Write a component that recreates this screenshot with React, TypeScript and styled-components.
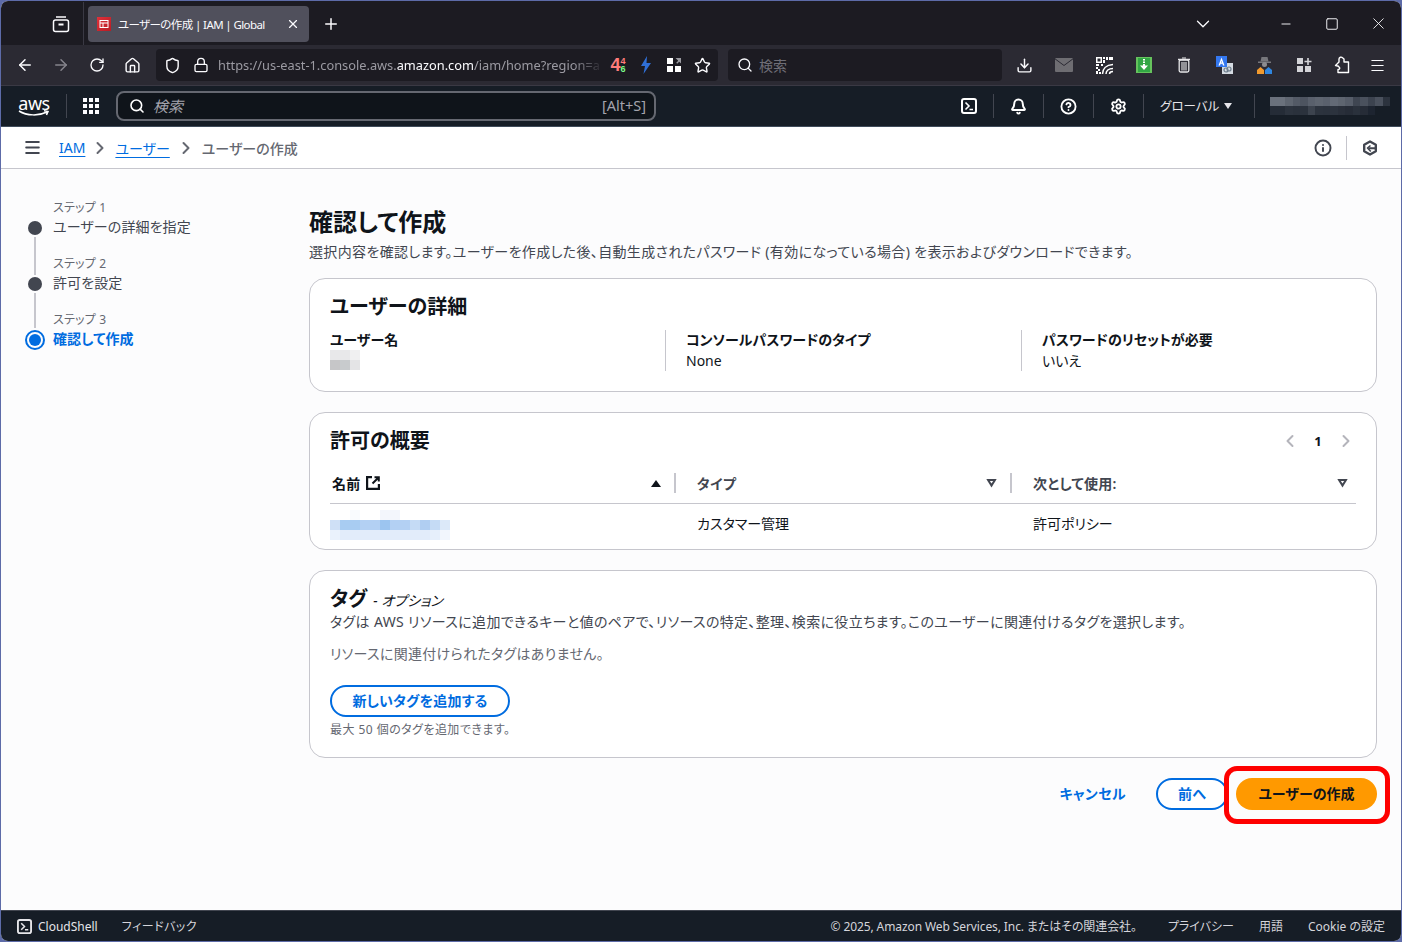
import React from 'react';
import styled, {createGlobalStyle} from 'styled-components';
import {
  ArrowLeft, ArrowRight, RotateCw, House, Shield, Lock, Star, Search, Download, X, Plus,
  ChevronDown, ChevronRight, ChevronLeft, Minus, Square, Menu, Bell, CircleHelp, Settings, Info,
} from 'lucide-react';

const UI_FONT = `"Noto Sans", "Noto Sans CJK JP", sans-serif`;

const GlobalStyle = createGlobalStyle`
  html, body {
    margin: 0;
    padding: 0;
    background: #5d6ba8;
  }
  * {
    box-sizing: border-box;
  }
`;

const Window = styled.div`
  width: 1402px;
  height: 942px;
  border: 1px solid #5d6ba8;
  border-radius: 8px;
  overflow: hidden;
  display: flex;
  flex-direction: column;
  background: #fcfcfd;
  font-family: ${UI_FONT};
  font-size: 14px;
  font-feature-settings: "palt";
  color: #0f141a;
`;

/* browser chrome */
const TabBar = styled.div`
  height: 44px;
  flex: none;
  background: #1c1b22;
  display: flex;
  align-items: center;
  color: #fbfbfe;
  padding-top: 1px;
`;

const TabBarButton = styled.div<{$width: number}>`
  width: ${p => p.$width}px;
  height: 36px;
  flex: none;
  display: flex;
  align-items: center;
  justify-content: center;
`;

const TabDivider = styled.div`
  width: 1px;
  height: 44px;
  background: #3a3944;
  margin: 0 4px 0 2px;
  flex: none;
`;

const Tab = styled.div`
  width: 221px;
  height: 36px;
  flex: none;
  border-radius: 4px;
  background: #50505c;
  display: flex;
  align-items: center;
  padding: 0 9px;
  font-size: 11.5px;
  letter-spacing: -0.6px;
  gap: 7px;
  svg {
    flex: none;
  }
`;

const Favicon = styled.div`
  width: 14px;
  height: 14px;
  flex: none;
  background: linear-gradient(135deg, #e0313a, #b81c24);
  display: flex;
  align-items: center;
  justify-content: center;
`;

const TabTitle = styled.span`
  flex: 1;
  white-space: nowrap;
`;

const Spacer = styled.div`
  flex: 1;
`;

const Toolbar = styled.div`
  height: 41px;
  flex: none;
  background: #2b2a33;
  border-bottom: 1px solid #3a3944;
  display: flex;
  align-items: center;
  padding-left: 6px;
  color: #fbfbfe;
`;

const ToolButton = styled.div<{$width?: number; $dim?: boolean}>`
  width: ${p => p.$width ?? 36}px;
  height: 32px;
  flex: none;
  display: flex;
  align-items: center;
  justify-content: center;
  color: ${p => (p.$dim ? '#85848c' : '#fbfbfe')};
`;

const UrlBar = styled.div`
  width: 562px;
  height: 32px;
  margin-left: 7px;
  flex: none;
  border-radius: 4px;
  background: #1c1b22;
  display: flex;
  align-items: center;
  padding-left: 4px;
`;

const UrlText = styled.div`
  width: 386px;
  height: 20px;
  line-height: 20px;
  overflow: hidden;
  white-space: nowrap;
  font-size: 12.8px;
  color: #9b9aa2;
  mask-image: linear-gradient(to right, #000 92%, transparent);
`;

const UrlHost = styled.span`
  color: #fbfbfe;
`;

const Counter = styled.div`
  display: flex;
  align-items: center;
  font-family: "Liberation Sans", sans-serif;
  font-weight: 700;
  color: #ff7b7b;
`;

const CounterMain = styled.span`
  font-size: 18px;
  line-height: 18px;
`;

const CounterSide = styled.div`
  display: flex;
  flex-direction: column;
  font-size: 9px;
  line-height: 8px;
`;

const CounterLow = styled.span`
  color: #7dff8a;
`;

const SearchBar = styled.div`
  width: 274px;
  height: 32px;
  margin-left: 10px;
  margin-right: 2px;
  flex: none;
  border-radius: 4px;
  background: #1c1b22;
  display: flex;
  align-items: center;
  padding-left: 9px;
  gap: 6px;
  color: #6f6e77;
  font-size: 14px;
`;

/* aws top nav */
const TopNav = styled.div`
  height: 41px;
  flex: none;
  background: #161d26;
  border-bottom: 1px solid #3f4b5a;
  display: flex;
  align-items: center;
  padding-right: 11px;
  color: #fff;
`;

const AwsLogo = styled.div`
  width: 32px;
  margin-left: 17px;
  flex: none;
  display: flex;
  flex-direction: column;
  align-items: center;
  font-family: "Noto Sans", sans-serif;
  font-size: 18px;
  line-height: 14px;
  font-weight: 400;
  letter-spacing: -0.5px;
`;

const NavDivider = styled.div<{$ml?: number; $mr?: number}>`
  width: 1px;
  height: 24px;
  flex: none;
  background: #424650;
  margin: 0 ${p => p.$mr ?? 0}px 0 ${p => p.$ml ?? 0}px;
`;

const NavSearch = styled.div`
  width: 540px;
  height: 30px;
  flex: none;
  margin-left: 16px;
  border: 2px solid #656871;
  border-radius: 8px;
  background: #0f141a;
  display: flex;
  align-items: center;
  padding: 0 8px 0 11px;
  gap: 8px;
  color: #a4a4ad;
`;

const NavSearchText = styled.span`
  flex: 1;
  font-style: italic;
  font-size: 15px;
  margin-top: -2px;
`;

const NavShortcut = styled.span`
  font-size: 14.5px;
  margin-top: -2px;
`;

const NavIcon = styled.div`
  width: 49px;
  flex: none;
  display: flex;
  justify-content: center;
`;

const RegionText = styled.div`
  width: 110px;
  flex: none;
  display: flex;
  align-items: center;
  gap: 5px;
  padding: 0 0 2px 16px;
  font-size: 12.5px;
  color: #e6e6ea;
`;

const Caret = styled.span<{$color: string; $size?: number}>`
  width: 0;
  height: 0;
  flex: none;
  margin-top: 2px;
  border-left: ${p => p.$size ?? 4.5}px solid transparent;
  border-right: ${p => p.$size ?? 4.5}px solid transparent;
  border-top: ${p => (p.$size ?? 4.5) + 2}px solid ${p => p.$color};
`;

const PixelGrid = styled.div<{$cols: number; $cell: number; $rowHeight?: number}>`
  display: grid;
  grid-template-columns: repeat(${p => p.$cols}, ${p => p.$cell}px);
  grid-auto-rows: ${p => p.$rowHeight ?? p.$cell}px;
  flex: none;
`;

const Pixel = styled.div<{$color: string}>`
  background: ${p => p.$color};
`;

const Pixels: React.FC<{cols: number; cell: number; rowHeight?: number; colors: string[]}> = ({cols, cell, rowHeight, colors}) => (
  <PixelGrid $cols={cols} $cell={cell} $rowHeight={rowHeight}>
    {colors.map((c, i) => (
      <Pixel key={i} $color={c}/>
    ))}
  </PixelGrid>
);

/* breadcrumb */
const BreadcrumbBar = styled.div`
  height: 42px;
  flex: none;
  background: #fff;
  border-bottom: 1px solid #c6c6cd;
  display: flex;
  align-items: center;
  padding: 0 0 0 21px;
  color: #424650;
`;

const CrumbLink = styled.a`
  color: #006ce0;
  text-decoration: underline;
  text-underline-offset: 3px;
`;

const CrumbSep = styled.div<{$width: number}>`
  width: ${p => p.$width}px;
  flex: none;
  display: flex;
  justify-content: center;
  color: #656871;
`;

const CrumbCurrent = styled.span`
  color: #656871;
  font-weight: 500;
`;

const BarIcon = styled.div`
  width: 24px;
  flex: none;
  display: flex;
  justify-content: center;
`;

const BarDivider = styled.div`
  width: 1px;
  height: 24px;
  background: #c6c6cd;
  margin: 0 11px;
`;

/* main area */
const Main = styled.div`
  flex: 1;
  display: flex;
  min-height: 0;
`;

const Sidebar = styled.nav`
  width: 308px;
  flex: none;
  padding: 30px 0 0 22px;
`;

const Step = styled.div`
  height: 56px;
  display: flex;
  gap: 6px;
`;

const Rail = styled.div`
  width: 24px;
  flex: none;
  display: flex;
  flex-direction: column;
  align-items: center;
`;

const RailLine = styled.div<{$height?: number; $hidden?: boolean}>`
  width: 2px;
  flex: ${p => (p.$height ? 'none' : '1')};
  height: ${p => (p.$height ? `${p.$height}px` : 'auto')};
  background: ${p => (p.$hidden ? 'transparent' : '#c6c6cd')};
`;

const StepDot = styled.div`
  width: 14px;
  height: 14px;
  margin: 2px 0;
  flex: none;
  border-radius: 50%;
  background: #424650;
`;

const StepRing = styled.div`
  width: 20px;
  height: 20px;
  margin: 2px 0;
  flex: none;
  border-radius: 50%;
  border: 2px solid #006ce0;
  display: flex;
  align-items: center;
  justify-content: center;
  &::after {
    content: '';
    width: 12px;
    height: 12px;
    border-radius: 50%;
    background: #006ce0;
  }
`;

const StepText = styled.div`
  display: flex;
  flex-direction: column;
  padding-top: 1px;
`;

const StepLabel = styled.span`
  font-size: 12px;
  line-height: 16px;
  color: #656871;
  letter-spacing: 0.2px;
`;

const StepTitle = styled.span<{$active?: boolean}>`
  margin-top: 1px;
  line-height: 20px;
  letter-spacing: 0.1px;
  color: ${p => (p.$active ? '#006ce0' : '#424650')};
  font-weight: ${p => (p.$active ? 700 : 400)};
`;

const Content = styled.main`
  flex: 1;
  min-width: 0;
  padding: 38px 24px 0 0;
  display: flex;
  flex-direction: column;
`;

const PageTitle = styled.h1`
  margin: 0;
  font-size: 24px;
  line-height: 30px;
  font-weight: 700;
`;

const PageDesc = styled.p`
  margin: 5px 0 16px;
  line-height: 20px;
  letter-spacing: 0.35px;
  color: #424650;
`;

const Card = styled.section<{$height: number}>`
  height: ${p => p.$height}px;
  flex: none;
  background: #fff;
  border: 1px solid #c6c6cd;
  border-radius: 16px;
  padding: 14px 20px 0;
  & + & {
    margin-top: 20px;
  }
`;

const CardTitle = styled.h2`
  margin: 0;
  font-size: 20px;
  line-height: 28px;
  font-weight: 700;
  display: flex;
  align-items: baseline;
`;

const CardOption = styled.span`
  margin-left: 6px;
  font-size: 14px;
  font-weight: 400;
  font-style: italic;
`;

const DetailGrid = styled.div`
  margin-top: 9px;
  display: grid;
  grid-template-columns: 336px 356px 1fr;
`;

const DetailCol = styled.div<{$divided?: boolean}>`
  height: 41px;
  padding-left: ${p => (p.$divided ? '20px' : '0')};
  border-left: ${p => (p.$divided ? '1px solid #c6c6cd' : 'none')};
  margin-left: ${p => (p.$divided ? '-1px' : '0')};
`;

const DetailLabel = styled.div`
  line-height: 20px;
  font-weight: 600;
`;

const DetailValue = styled.div`
  line-height: 20px;
  margin-top: 1px;
  color: #0f141a;
`;

const CardHeader = styled.div`
  display: flex;
  align-items: center;
  justify-content: space-between;
`;

const Pager = styled.div`
  display: flex;
  align-items: center;
  gap: 6px;
  color: #b4b4bb;
  font-weight: 700;
`;

const PageNumber = styled.span`
  width: 24px;
  text-align: center;
  color: #0f141a;
  font-size: 13px;
`;

const TableGrid = styled.div`
  display: grid;
  grid-template-columns: 346px 336px 1fr;
`;

const HeadCell = styled.div<{$first?: boolean}>`
  height: 40px;
  margin-top: 9px;
  border-bottom: 1px solid #c6c6cd;
  display: flex;
  align-items: center;
  padding: 0 8px 1px ${p => (p.$first ? '2px' : '21px')};
  font-weight: 600;
  letter-spacing: 0.3px;
  color: ${p => (p.$first ? '#0f141a' : '#424650')};
`;

const HeadLabel = styled.span`
  flex: 1;
  display: flex;
  align-items: center;
  gap: 5px;
`;

const HeadSep = styled.div`
  width: 2px;
  height: 20px;
  background: #c6c6cd;
  margin-left: 13px;
  margin-right: -8px;
`;

const SortUp = styled.span`
  width: 0;
  height: 0;
  border-left: 5.5px solid transparent;
  border-right: 5.5px solid transparent;
  border-bottom: 7px solid #0f141a;
`;

const SortDown = styled.span`
  width: 11px;
  height: 9px;
  flex: none;
  background: #424650;
  clip-path: polygon(0 0, 100% 0, 50% 100%);
  display: flex;
  justify-content: center;
  padding-top: 2px;
  &::after {
    content: '';
    width: 4px;
    height: 3px;
    background: #fff;
    clip-path: polygon(0 0, 100% 0, 50% 100%);
  }
`;

const BodyCell = styled.div<{$first?: boolean}>`
  height: 37px;
  padding: 0 0 ${p => (p.$first ? '1px' : '0')} ${p => (p.$first ? '0' : '21px')};
  display: flex;
  align-items: ${p => (p.$first ? 'flex-end' : 'center')};
  color: #0f141a;
`;

const TagDesc = styled.p`
  margin: -3px 0 0;
  line-height: 20px;
  letter-spacing: 0.35px;
  color: #424650;
`;

const TagEmpty = styled.p`
  margin: 12px 0 0;
  line-height: 20px;
  letter-spacing: 0.3px;
  color: #656871;
`;

const OutlineButton = styled.button<{$width: number}>`
  width: ${p => p.$width}px;
  height: 32px;
  flex: none;
  padding: 0 0 3px;
  border: 2px solid #006ce0;
  border-radius: 20px;
  background: #fff;
  color: #006ce0;
  font: 700 14px ${UI_FONT};
  font-feature-settings: "palt";
  letter-spacing: 0.2px;
`;

const AddTagButton = styled(OutlineButton)`
  display: block;
  margin-top: 21px;
`;

const Hint = styled.div`
  margin-top: 5px;
  font-size: 12px;
  line-height: 16px;
  letter-spacing: 0.45px;
  color: #656871;
`;

const Actions = styled.div`
  margin-top: 20px;
  display: flex;
  align-items: center;
  justify-content: flex-end;
`;

const CancelLink = styled.a`
  margin: -3px 30px 0 0;
  color: #006ce0;
  font-weight: 700;
  letter-spacing: 0.4px;
`;

const PrimaryWrap = styled.div`
  position: relative;
  margin-left: 8px;
`;

const PrimaryButton = styled.button`
  display: block;
  width: 141px;
  height: 32px;
  padding: 0 0 2px;
  border: none;
  border-radius: 20px;
  background: #ff9900;
  color: #0f141a;
  font: 700 14px ${UI_FONT};
  font-feature-settings: "palt";
`;

const Highlight = styled.div`
  position: absolute;
  left: -12px;
  right: -13px;
  top: -12px;
  bottom: -14px;
  border: 5px solid #fe0000;
  border-radius: 13px;
  pointer-events: none;
`;

/* footer */
const Footer = styled.footer`
  height: 31px;
  flex: none;
  background: #161d26;
  border-top: 1px solid #424650;
  display: flex;
  align-items: center;
  padding: 0 16px;
  font-size: 12px;
  color: #d5d5db;
`;

const ShellLink = styled.div`
  display: flex;
  align-items: center;
  gap: 6px;
  color: #e6e6ea;
  margin-right: 24px;
`;

const FeedbackLink = styled.span`
  letter-spacing: 0.5px;
`;

const FooterLinks = styled.div`
  display: flex;
  align-items: center;
  gap: 25px;
`;

const Copyright = styled.span`
  margin-right: 6px;
  letter-spacing: -0.1px;
`;

const TerminalIcon: React.FC<{size?: number}> = ({size = 16}) => (
  <svg width={size} height={size} viewBox="0 0 16 16" fill="none" stroke="currentColor" strokeWidth="2">
    <rect x="1" y="1" width="14" height="14" rx="2"/>
    <path d="M4.5 4.5 8 8l-3.500 3.500M8.500 11.500H12" strokeWidth="1.600"/>
  </svg>
);

const FirefoxViewIcon = () => (
  <svg width="18" height="18" viewBox="0 0 18 18" fill="none" stroke="currentColor" strokeWidth="1.500">
    <path d="M4 2h10"/>
    <rect x="1.500" y="5" width="15" height="11.500" rx="2"/>
    <path d="M6.500 9.500h5" strokeWidth="2"/>
  </svg>
);

const AppsIcon = () => (
  <svg width="18" height="18" viewBox="0 0 18 18" fill="currentColor">
    {[1, 7, 13].flatMap(y =>
      [1, 7, 13].map(x => <rect key={`${x}-${y}`} x={x} y={y} width="4" height="4"/>),
    )}
  </svg>
);

const ExtGridIcon: React.FC<{plus?: boolean}> = ({plus}) => (
  <svg width="16" height="16" viewBox="0 0 16 16" fill={plus ? '#d4d4d8' : '#fff'}>
    <rect x="1" y="1" width="6" height="6"/>
    <rect x="1" y="9" width="6" height="6"/>
    <rect x="9" y="9" width="6" height="6"/>
    {plus
      ? <path d="M11.200 1h1.600v2.700h2.700v1.600h-2.700V8h-1.600V5.300H8.500V3.700h2.700z"/>
      : <path d="M9.500 1H15v5.500l-1.800-1.800-2 2-1-1 2-2z" fill="#9a9aa0"/>}
  </svg>
);

const BoltIcon = () => (
  <svg width="10" height="18" viewBox="0 0 10 18" fill="#2f6fd6">
    <path d="M6 0 0 10h4l-1.500 8L10 7H5.500z"/>
  </svg>
);

const MailIcon = () => (
  <svg width="18" height="14" viewBox="0 0 18 14">
    <rect width="18" height="14" rx="1" fill="#6e6d72"/>
    <path d="M0 .8l9 6.700 9-6.700" fill="none" stroke="#2b2a33" strokeWidth="1"/>
  </svg>
);

const QrIcon = () => (
  <svg width="17" height="17" viewBox="0 0 17 17" fill="#fff">
    <path d="M0 0h6v6H0zM1.500 1.500v3h3v-3z" fillRule="evenodd"/>
    <path d="M7 0h2v2H7zM10 0h2v3h-2zM13 0h4v3h-4zM7 3h2v3H7zM0 7h3v2H0zM5 7h2v2H5z"/>
    <path d="M0 10h2v2H0zM2 12h2v2H2zM0 14h2v3H0zM3 15h2v2H3z"/>
    <path d="M6.500 17c0-5 3.500-9 10.500-9.500M10 17c0-3 2.500-5.500 7-5.500M13.500 17c0-1.500 1.500-2.500 3.500-2.500" fill="none" stroke="#fff" strokeWidth="1.500"/>
  </svg>
);

const GreenDownIcon = () => (
  <svg width="16" height="16" viewBox="0 0 16 16">
    <rect width="16" height="16" fill="#66c35d"/>
    <rect x="2" y="1" width="12" height="14" fill="#32a744"/>
    <path d="M7 2h2v1.500H7zM7 4.500h2V6H7zM7 7h2v1.500h3L8 13 4 8.500h3z" fill="#fff"/>
  </svg>
);

const TrashIcon = () => (
  <svg width="14" height="16" viewBox="0 0 14 16" fill="none" stroke="#e8e8ea">
    <path d="M1 2.500h12" strokeWidth="1.500"/>
    <path d="M5 1h4" strokeWidth="1.200"/>
    <rect x="2.200" y="3" width="9.600" height="12" rx="1.500" strokeWidth="1.300"/>
    <path d="M5 5v8.500M7 5v8.500M9 5v8.500" strokeWidth="1.100"/>
  </svg>
);

const TranslateIcon = () => (
  <svg width="17" height="18" viewBox="0 0 17 18">
    <rect x="6" y="7" width="11" height="11" fill="#d5dbe2"/>
    <rect width="11" height="11" fill="#3478f0"/>
    <path d="M5.500 1.500 8.500 9.500H7L6.400 7.800H4.600L4 9.500H2.500zM5 6.500h1L5.500 4.800z" fill="#fff" fillRule="evenodd"/>
    <circle cx="10" cy="14" r="2" fill="none" stroke="#6d7d8c" strokeWidth="1.200"/>
    <circle cx="13" cy="13" r="2" fill="none" stroke="#6d7d8c" strokeWidth="1.200"/>
  </svg>
);

const SpyIcon = () => (
  <svg width="15" height="17" viewBox="0 0 15 17">
    <path d="M4.500 0h6l1 4.500h-8z" fill="#77777c"/>
    <rect x="1" y="4.500" width="13" height="1.500" fill="#77777c"/>
    <circle cx="7.500" cy="7.500" r="2.500" fill="#8c8c90"/>
    <path d="M0 17v-4l3.500-3 3.500 3v4z" fill="#f19a2e"/>
    <path d="M15 17v-4l-3.500-3L8 13v4z" fill="#2f86e0"/>
  </svg>
);

const PuzzleIcon = () => (
  <svg width="17" height="18" viewBox="0 0 17 18" fill="none" stroke="#fff" strokeWidth="1.400" strokeLinejoin="round">
    <path d="M6 6V3a2 2 0 0 1 3.500-1.200L11 3v3h4.500v10.500H5V13.500C6.500 13.500 7 12.500 6.500 11.500S5 9.500 2.500 9.500z"/>
  </svg>
);

const HexIcon = () => (
  <svg width="16" height="16" viewBox="0 0 16 16" fill="none" stroke="#424650" strokeWidth="2.400" strokeLinejoin="round">
    <path d="M8 1.500 13.800 4.700v6.600L8 14.500 2.200 11.300V4.700z"/>
    <path d="M8.500 5.500 5.500 8 8.800 11.500" strokeWidth="1.600"/>
    <path d="M6.500 8.200h7" strokeWidth="2"/>
  </svg>
);

const ExternalIcon = () => (
  <svg width="14" height="14" viewBox="0 0 14 14" fill="none" stroke="#0f141a" strokeWidth="2.200">
    <path d="M6 1.100H1.100v11.800h11.800V8"/>
    <path d="M6.500 7.500 12.800 1.200M8.500 1.200h4.300v4.300" strokeWidth="2"/>
  </svg>
);

const ACCOUNT_PIXELS = [
  '#6a717c', '#6a717c', '#5e6570', '#535a66', '#4d5460', '#59606c', '#5e6570', '#5a616d', '#636a76', '#5e6570', '#565d69', '#3f4652', '#4a515d', '#3c434f', '#4a515d', '#2c333e',
  '#252c37', '#252c37', '#2c333e', '#2a313c', '#2b323d', '#3c434e', '#2c333e', '#2b323d', '#2c333e', '#292f3a', '#262c37', '#2a313c', '#262c37', '#1d2430', '#161d26', '#161d26',
];

const USER_PIXELS = [
  '#e8e8ea', '#e8e8ea', '#f0f0f1',
  '#c6c6c8', '#c8cbcd', '#e4e4e6',
];

const POLICY_PIXELS = [
  '#fff', '#fff', '#f9fbfe', '#fff', '#fff', '#f3f6fc', '#f3f6fc', '#fff', '#fff', '#fff', '#fff', '#fff',
  '#cfe0f6', '#a8ccf2', '#a8ccf2', '#b3d0f3', '#b3d0f3', '#9cc5f0', '#b3d0f3', '#b3d0f3', '#c5dbf5', '#b0cef2', '#c5dbf5', '#dce9f9',
  '#eaf2fc', '#e2ecfa', '#e2ecfa', '#e2ecfa', '#e2ecfa', '#e2ecfa', '#e2ecfa', '#e2ecfa', '#e2ecfa', '#e2ecfa', '#e6effb', '#f2f6fd',
];

const App: React.FC = () => {
  return (
    <>
      <GlobalStyle/>
      <Window>
        <TabBar>
          <TabBarButton $width={40}/>
          <TabBarButton $width={40}>
            <FirefoxViewIcon/>
          </TabBarButton>
          <TabDivider/>
          <Tab>
            <Favicon>
              <svg width="10" height="10" viewBox="0 0 10 10" fill="none" stroke="#fff" strokeWidth="1">
                <rect x="1" y="1.500" width="8" height="7"/>
                <path d="M1 4h8M4 4v4.500"/>
              </svg>
            </Favicon>
            <TabTitle>ユーザーの作成 | IAM | Global</TabTitle>
            <X size={14}/>
          </Tab>
          <TabBarButton $width={44}>
            <Plus size={18}/>
          </TabBarButton>
          <Spacer/>
          <TabBarButton $width={40}>
            <ChevronDown size={22} strokeWidth={1.400}/>
          </TabBarButton>
          <TabBarButton $width={40}/>
          <TabBarButton $width={46}>
            <Minus size={14} strokeWidth={1.600}/>
          </TabBarButton>
          <TabBarButton $width={46}>
            <Square size={14} strokeWidth={1.600}/>
          </TabBarButton>
          <TabBarButton $width={46}>
            <X size={19} strokeWidth={1.100}/>
          </TabBarButton>
        </TabBar>

        <Toolbar>
          <ToolButton><ArrowLeft size={18}/></ToolButton>
          <ToolButton $dim><ArrowRight size={18}/></ToolButton>
          <ToolButton><RotateCw size={16}/></ToolButton>
          <ToolButton $width={34}><House size={17}/></ToolButton>
          <UrlBar>
            <ToolButton $width={24}><Shield size={17}/></ToolButton>
            <ToolButton $width={34}><Lock size={16}/></ToolButton>
            <UrlText>
              https://us-east-1.console.aws.<UrlHost>amazon.com</UrlHost>/iam/home?region=a
            </UrlText>
            <ToolButton $width={28}>
              <Counter>
                <CounterMain>4</CounterMain>
                <CounterSide>
                  <span>4</span>
                  <CounterLow>6</CounterLow>
                </CounterSide>
              </Counter>
            </ToolButton>
            <ToolButton $width={28}><BoltIcon/></ToolButton>
            <ToolButton $width={28}><ExtGridIcon/></ToolButton>
            <ToolButton $width={28}><Star size={17}/></ToolButton>
          </UrlBar>
          <SearchBar>
            <Search size={16} color="#fbfbfe"/>
            検索
          </SearchBar>
          <ToolButton $width={40}><Download size={17}/></ToolButton>
          <ToolButton $width={40}><MailIcon/></ToolButton>
          <ToolButton $width={40}><QrIcon/></ToolButton>
          <ToolButton $width={40}><GreenDownIcon/></ToolButton>
          <ToolButton $width={40}><TrashIcon/></ToolButton>
          <ToolButton $width={40}><TranslateIcon/></ToolButton>
          <ToolButton $width={40}><SpyIcon/></ToolButton>
          <ToolButton $width={40}><ExtGridIcon plus/></ToolButton>
          <ToolButton $width={35}><PuzzleIcon/></ToolButton>
          <ToolButton $width={36}><Menu size={17} strokeWidth={1.500}/></ToolButton>
        </Toolbar>

        <TopNav>
          <AwsLogo>
            aws
            <svg width="32" height="7" viewBox="0 0 32 7" fill="none" stroke="#fff" strokeWidth="1.500">
              <path d="M1 1c8 5 20 5 28 1M26 0.800 30 1.500 28.500 5"/>
            </svg>
          </AwsLogo>
          <NavDivider $ml={16} $mr={15}/>
          <ToolButton $width={18}><AppsIcon/></ToolButton>
          <NavSearch>
            <Search size={16} color="#fff" strokeWidth={2.400}/>
            <NavSearchText>検索</NavSearchText>
            <NavShortcut>[Alt+S]</NavShortcut>
          </NavSearch>
          <Spacer/>
          <NavIcon><TerminalIcon/></NavIcon>
          <NavDivider/>
          <NavIcon><Bell size={17} strokeWidth={2.800}/></NavIcon>
          <NavDivider/>
          <NavIcon><CircleHelp size={17} strokeWidth={2.600}/></NavIcon>
          <NavDivider/>
          <NavIcon><Settings size={17} strokeWidth={2.600}/></NavIcon>
          <NavDivider/>
          <RegionText>
            グローバル
            <Caret $color="#e6e6ea"/>
          </RegionText>
          <NavDivider $mr={15}/>
          <Pixels cols={16} cell={7.500} rowHeight={9} colors={ACCOUNT_PIXELS}/>
        </TopNav>

        <BreadcrumbBar>
          <ToolButton $width={20}><Menu size={19} color="#424650" strokeWidth={2.400}/></ToolButton>
          <ToolButton $width={17}/>
          <CrumbLink>IAM</CrumbLink>
          <CrumbSep $width={30}><ChevronRight size={20} strokeWidth={2.400}/></CrumbSep>
          <CrumbLink>ユーザー</CrumbLink>
          <CrumbSep $width={32}><ChevronRight size={20} strokeWidth={2.400}/></CrumbSep>
          <CrumbCurrent>ユーザーの作成</CrumbCurrent>
          <Spacer/>
          <BarIcon><Info size={18} color="#424650" strokeWidth={2.600}/></BarIcon>
          <BarDivider/>
          <BarIcon><HexIcon/></BarIcon>
          <ToolButton $width={19}/>
        </BreadcrumbBar>

        <Main>
          <Sidebar>
            <Step>
              <Rail>
                <RailLine $height={20} $hidden/>
                <StepDot/>
                <RailLine/>
              </Rail>
              <StepText>
                <StepLabel>ステップ 1</StepLabel>
                <StepTitle>ユーザーの詳細を指定</StepTitle>
              </StepText>
            </Step>
            <Step>
              <Rail>
                <RailLine $height={20}/>
                <StepDot/>
                <RailLine/>
              </Rail>
              <StepText>
                <StepLabel>ステップ 2</StepLabel>
                <StepTitle>許可を設定</StepTitle>
              </StepText>
            </Step>
            <Step>
              <Rail>
                <RailLine $height={17}/>
                <StepRing/>
              </Rail>
              <StepText>
                <StepLabel>ステップ 3</StepLabel>
                <StepTitle $active>確認して作成</StepTitle>
              </StepText>
            </Step>
          </Sidebar>

          <Content>
            <PageTitle>確認して作成</PageTitle>
            <PageDesc>
              選択内容を確認します。ユーザーを作成した後、自動生成されたパスワード (有効になっている場合) を表示およびダウンロードできます。
            </PageDesc>

            <Card $height={114}>
              <CardTitle>ユーザーの詳細</CardTitle>
              <DetailGrid>
                <DetailCol>
                  <DetailLabel>ユーザー名</DetailLabel>
                  <Pixels cols={3} cell={10} colors={USER_PIXELS}/>
                </DetailCol>
                <DetailCol $divided>
                  <DetailLabel>コンソールパスワードのタイプ</DetailLabel>
                  <DetailValue>None</DetailValue>
                </DetailCol>
                <DetailCol $divided>
                  <DetailLabel>パスワードのリセットが必要</DetailLabel>
                  <DetailValue>いいえ</DetailValue>
                </DetailCol>
              </DetailGrid>
            </Card>

            <Card $height={138}>
              <CardHeader>
                <CardTitle>許可の概要</CardTitle>
                <Pager>
                  <ChevronLeft size={20} strokeWidth={2.400}/>
                  <PageNumber>1</PageNumber>
                  <ChevronRight size={20} strokeWidth={2.400}/>
                </Pager>
              </CardHeader>
              <TableGrid>
                <HeadCell $first>
                  <HeadLabel>名前 <ExternalIcon/></HeadLabel>
                  <SortUp/>
                  <HeadSep/>
                </HeadCell>
                <HeadCell>
                  <HeadLabel>タイプ</HeadLabel>
                  <SortDown/>
                  <HeadSep/>
                </HeadCell>
                <HeadCell>
                  <HeadLabel>次として使用:</HeadLabel>
                  <SortDown/>
                </HeadCell>
                <BodyCell $first>
                  <Pixels cols={12} cell={10} colors={POLICY_PIXELS}/>
                </BodyCell>
                <BodyCell>カスタマー管理</BodyCell>
                <BodyCell>許可ポリシー</BodyCell>
              </TableGrid>
            </Card>

            <Card $height={188}>
              <CardTitle>
                タグ
                <CardOption>- オプション</CardOption>
              </CardTitle>
              <TagDesc>
                タグは AWS リソースに追加できるキーと値のペアで、リソースの特定、整理、検索に役立ちます。このユーザーに関連付けるタグを選択します。
              </TagDesc>
              <TagEmpty>リソースに関連付けられたタグはありません。</TagEmpty>
              <AddTagButton $width={180}>新しいタグを追加する</AddTagButton>
              <Hint>最大 50 個のタグを追加できます。</Hint>
            </Card>

            <Actions>
              <CancelLink>キャンセル</CancelLink>
              <OutlineButton $width={72}>前へ</OutlineButton>
              <PrimaryWrap>
                <PrimaryButton>ユーザーの作成</PrimaryButton>
                <Highlight/>
              </PrimaryWrap>
            </Actions>
          </Content>
        </Main>

        <Footer>
          <ShellLink>
            <TerminalIcon size={15}/>
            CloudShell
          </ShellLink>
          <FeedbackLink>フィードバック</FeedbackLink>
          <Spacer/>
          <FooterLinks>
            <Copyright>© 2025, Amazon Web Services, Inc. またはその関連会社。</Copyright>
            <span>プライバシー</span>
            <span>用語</span>
            <span>Cookie の設定</span>
          </FooterLinks>
        </Footer>
      </Window>
    </>
  );
};

export default App;
